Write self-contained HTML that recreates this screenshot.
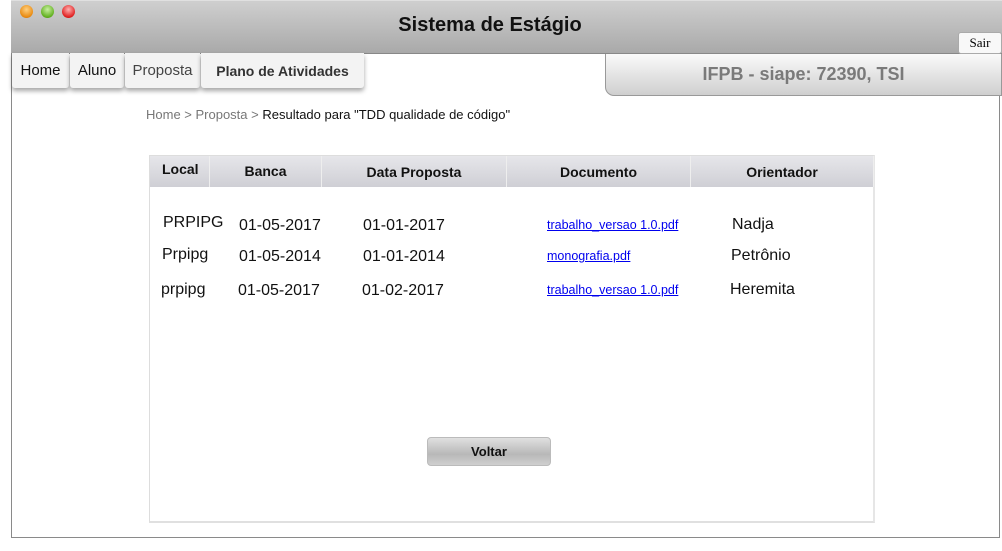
<!DOCTYPE html>
<html><head><meta charset="utf-8"><style>
*{margin:0;padding:0;box-sizing:border-box}
body{width:1002px;height:551px;background:#fff;position:relative;overflow:hidden;font-family:"Liberation Sans",Arial,sans-serif}
.a{position:absolute;white-space:nowrap}
.frame{left:11px;top:0;width:989px;height:538px;border-left:1px solid #8a8a8a;border-right:1px solid #8a8a8a;border-bottom:1px solid #8a8a8a}
.title{left:11px;top:0;width:991px;height:54px;background:linear-gradient(#cfcfcf,#a9a9a9);border-top:1px solid #e0e0e0;border-bottom:1px solid #888}
.dot{width:13px;height:13px;border-radius:50%;top:5px}
.tab{top:53px;height:35px;background:#f3f3f3;border-radius:0 0 3px 3px;box-shadow:0 3px 5px rgba(0,0,0,.35);font-size:15px;line-height:36px;color:#111;text-align:center}
.th{top:156px;height:31px;background:linear-gradient(#e6e6ea,#cfcfd5);font-weight:bold;font-size:14px;color:#111;border-right:1px solid #eee}
.td{font-size:16px;color:#111}
.lk{font-size:12.5px;color:#00e;text-decoration:underline}
</style></head><body>
<div class="a frame"></div>
<div class="a title"></div>
<div class="a dot" style="left:20px;background:radial-gradient(circle at 50% 35%,#ffd080,#e88a10 70%,#b06010)"></div>
<div class="a dot" style="left:41px;background:radial-gradient(circle at 50% 35%,#c8f0a0,#62b020 70%,#3a8010)"></div>
<div class="a dot" style="left:62px;background:radial-gradient(circle at 50% 35%,#ffb0b0,#e02020 70%,#a01010)"></div>
<div class="a" style="left:0;width:980px;top:14px;text-align:center;font-size:20px;font-weight:bold;color:#111">Sistema de Estágio</div>
<div class="a" style="left:958px;top:32px;width:44px;height:22px;background:#f8f8f8;border:1px solid #aaa;border-radius:3px;font-family:'Liberation Serif',serif;font-size:13px;text-align:center;line-height:20px">Sair</div>
<div class="a tab" style="left:12px;width:57px">Home</div>
<div class="a tab" style="left:70px;width:54px">Aluno</div>
<div class="a tab" style="left:125px;width:75px;color:#444">Proposta</div>
<div class="a tab" style="left:201px;width:163px;font-weight:bold;font-size:14px;color:#333">Plano de Atividades</div>
<div class="a" style="left:605px;top:54px;width:397px;height:42px;background:linear-gradient(#fafafa,#cfcfcf);border:1px solid #999;border-top:none;border-radius:0 0 0 9px;text-align:center;line-height:41px;font-size:18px;font-weight:bold;color:#7a7a7a">IFPB - siape: 72390, TSI</div>
<div class="a" style="left:146px;top:107px;font-size:13px;color:#777">Home &gt; Proposta &gt; <span style="color:#111">Resultado para "TDD qualidade de código"</span></div>
<div class="a" style="left:149px;top:155px;width:726px;height:368px;border:1px solid #ddd;border-right:2px solid #e6e6e6;border-bottom:2px solid #e0e0e0"></div>
<div class="a th" style="left:150px;width:60px;padding:5px 0 0 12px">Local</div>
<div class="a th" style="left:210px;width:112px;text-align:center;padding-top:7px">Banca</div>
<div class="a th" style="left:322px;width:185px;text-align:center;padding-top:8px">Data Proposta</div>
<div class="a th" style="left:507px;width:184px;text-align:center;padding-top:8px">Documento</div>
<div class="a th" style="left:691px;width:183px;text-align:center;padding-top:8px">Orientador</div>
<div class="a td" style="left:163px;top:214px">PRPIPG</div>
<div class="a td" style="left:239px;top:217px">01-05-2017</div>
<div class="a td" style="left:363px;top:217px">01-01-2017</div>
<div class="a lk" style="left:547px;top:218px">trabalho_versao 1.0.pdf</div>
<div class="a td" style="left:732px;top:216px">Nadja</div>
<div class="a td" style="left:162px;top:246px">Prpipg</div>
<div class="a td" style="left:239px;top:248px">01-05-2014</div>
<div class="a td" style="left:363px;top:248px">01-01-2014</div>
<div class="a lk" style="left:547px;top:249px">monografia.pdf</div>
<div class="a td" style="left:731px;top:247px">Petrônio</div>
<div class="a td" style="left:161px;top:281px">prpipg</div>
<div class="a td" style="left:238px;top:282px">01-05-2017</div>
<div class="a td" style="left:362px;top:282px">01-02-2017</div>
<div class="a lk" style="left:547px;top:283px">trabalho_versao 1.0.pdf</div>
<div class="a td" style="left:730px;top:281px">Heremita</div>
<div class="a" style="left:427px;top:437px;width:124px;height:29px;border:1px solid #bbb;border-radius:4px;background:linear-gradient(#e0e0e0,#b8b8b8 60%,#cfcfcf);text-align:center;line-height:28px;font-size:13px;font-weight:bold;color:#111">Voltar</div>
</body></html>
